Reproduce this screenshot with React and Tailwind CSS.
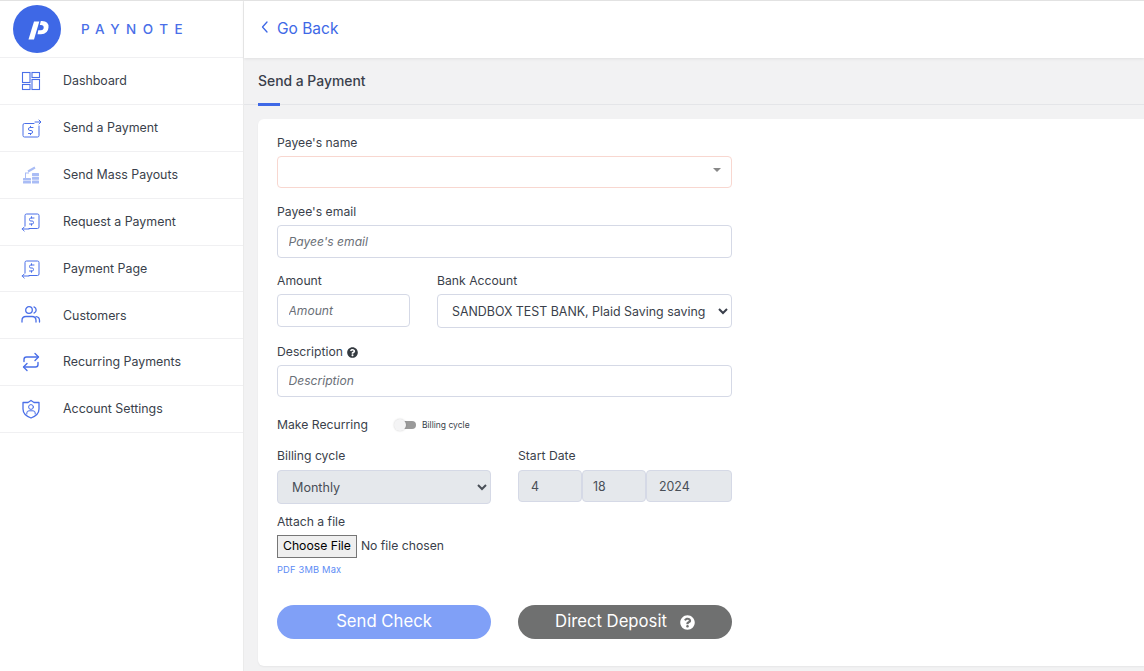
import {FaQuestionCircle} from 'react-icons/fa'

const DashboardIcon = () => (
    <svg width="20" height="20" viewBox="0 0 20 20" fill="none" stroke="#4a6fe8" strokeWidth="1.1">
        <rect x="1.500" y="1.500" width="7.500" height="10" />
        <rect x="11" y="1.500" width="7.500" height="5" />
        <rect x="1.500" y="13.500" width="7.500" height="5" />
        <rect x="11" y="8.500" width="7.500" height="10" />
    </svg>
)

const SendIcon = () => (
    <svg width="20" height="20" viewBox="0 0 20 20" fill="none" stroke="#4a6fe8" strokeWidth="1" strokeLinecap="round" strokeLinejoin="round">
        <path d="M13 5.500H3.500Q2 5.500 2 7V17.500Q2 19 3.500 19H16.500Q18 19 18 17.500V8" />
        <path d="M14 4H20M18 2L20 4L18 6" />
        <path d="M12 9.500H8.800Q7.500 9.500 7.500 11Q7.500 12.500 8.800 12.500H10.200Q11.500 12.500 11.500 14Q11.500 15.500 10.200 15.500H7.500M9.500 8.300V9.500M9.500 15.500V16.700" />
    </svg>
)

const MassIcon = () => (
    <svg width="20" height="20" viewBox="0 0 20 20" fill="#a9bcf5" stroke="none">
        <rect x="2" y="13" width="8" height="2.500" rx="0.5" />
        <rect x="2" y="16" width="8" height="2.500" rx="0.5" />
        <rect x="11" y="8" width="7" height="3" rx="0.5" />
        <rect x="11" y="11.700" width="7" height="3" rx="0.5" />
        <rect x="11" y="15.400" width="7" height="3.100" rx="0.5" />
        <path d="M4 13V7.500H8V8.500H5V13Z" />
        <path d="M6.500 5.500L13.500 1.500L14.500 3.500L7.500 7.500Z" />
    </svg>
)

const RequestIcon = () => (
    <svg width="20" height="20" viewBox="0 0 20 20" fill="none" stroke="#4a6fe8" strokeWidth="1" strokeLinecap="round" strokeLinejoin="round">
        <path d="M4 14V3.500Q4 2 5.500 2H16.500Q18 2 18 3.500V15Q18 16.500 16.500 16.500H8" />
        <path d="M1.200 17H8M3.200 15L1.200 17L3.200 19" />
        <path d="M13 6H9.800Q8.500 6 8.500 7.500Q8.500 9 9.800 9H11.200Q12.500 9 12.500 10.500Q12.500 12 11.200 12H8.500M10.500 4.700V6M10.500 12V13.300" />
    </svg>
)

const CustomersIcon = () => (
    <svg width="20" height="20" viewBox="0 0 20 20" fill="none" stroke="#4a6fe8" strokeWidth="1.300" strokeLinecap="round">
        <circle cx="8" cy="5" r="3.300" />
        <path d="M1 17V15.500Q1 11.500 5 11.500H11Q15 11.500 15 15.500V17" />
        <path d="M13 1.900A3.300 3.300 0 0 1 13 8.100" />
        <path d="M15 11.700Q18.500 12 18.500 15.500V17" />
    </svg>
)

const RecurringIcon = () => (
    <svg width="20" height="20" viewBox="0 0 20 20" fill="none" stroke="#4a6fe8" strokeWidth="1.400" strokeLinecap="round" strokeLinejoin="round">
        <path d="M3 9.500V7.500Q3 5 5.500 5H17" />
        <path d="M14 1.500L17.500 5L14 8.500" />
        <path d="M17 10.500V12.500Q17 15 14.500 15H3" />
        <path d="M6 11.500L2.500 15L6 18.500" />
    </svg>
)

const ShieldIcon = () => (
    <svg width="20" height="20" viewBox="0 0 20 20" fill="none" stroke="#4a6fe8" strokeWidth="1.300" strokeLinecap="round" strokeLinejoin="round">
        <path d="M10 1.500L13 3.500H18V10Q18 16 10 19Q2 16 2 10V3.500H7Z" />
        <circle cx="10" cy="8" r="2.400" strokeWidth="1" />
        <path d="M5.800 15V14Q5.800 11.800 8 11.800H12Q14.200 11.800 14.200 14V15" strokeWidth="1" />
    </svg>
)

const menuItems = [
    {label: 'Dashboard', icon: <DashboardIcon />},
    {label: 'Send a Payment', icon: <SendIcon />},
    {label: 'Send Mass Payouts', icon: <MassIcon />},
    {label: 'Request a Payment', icon: <RequestIcon />},
    {label: 'Payment Page', icon: <RequestIcon />},
    {label: 'Customers', icon: <CustomersIcon />},
    {label: 'Recurring Payments', icon: <RecurringIcon />},
    {label: 'Account Settings', icon: <ShieldIcon />},
]

const labelClass = 'block text-[12.2px] leading-[18px] text-[#3a3f4b]'
const inputClass = 'block w-full rounded-[4px] border border-[#d5d9e6] bg-white px-[10.5px] text-[12.1px] italic placeholder:text-[#6b7078] outline-none'
const lockedClass = 'rounded-[4px] border border-[#d5d9e6] bg-[#e5e8ec] text-[12.4px] leading-[31px] h-[32px] text-[#494f57]'

const Sidebar = () => (
    <aside className="w-[244px] shrink-0 bg-white border-r border-[#ebebeb]">
        <div className="flex h-[57px] items-center border-b border-[#f0f0f2] pl-[13px]">
            <svg width="48" height="48" viewBox="0 0 48 48">
                <circle cx="24" cy="24" r="24" fill="#3e68e6" />
                <path fill="#fff" d="M21 16.500H26.300L21 34.500H15.500Z" />
                <path fill="#fff" d="M27.800 16H29Q36 16 35.500 22.500Q35 29 28 29.200H24.500L25.300 25.300H28Q30.500 25.300 30.700 22.500Q30.800 20 28 20H26.800Z" />
            </svg>
            <span className="ml-[20px] text-[13.5px] font-medium tracking-[0.48em] text-[#4a6fe8]">PAYNOTE</span>
        </div>
        {menuItems.map((item) => (
            <div key={item.label} className="flex h-[46.9px] items-center border-b border-[#f0f0f2] pl-[21px]">
                <span className="w-[42px]">{item.icon}</span>
                <span className="pt-[1px] text-[12.4px] text-[#3a3f4b]">{item.label}</span>
            </div>
        ))}
    </aside>
)

const App = () => {
    return (
        <div className="flex h-[671px] w-[1144px] overflow-hidden border-t border-[#e2e2e2] bg-[#f2f2f3] font-['Inter',sans-serif]">
            <Sidebar />
            <main className="min-w-0 flex-1">
                {/* 상단 바 */}
                <div className="flex h-[57px] items-center bg-white pb-[2px] pl-[16px] shadow-[0_1px_3px_rgba(0,0,0,0.08)]">
                    <svg width="10" height="14" viewBox="0 0 10 14" fill="none" stroke="#3e68e6" strokeWidth="1.300" strokeLinecap="round" strokeLinejoin="round" className="mb-[4px]">
                        <path d="M7 2L2.500 7L7 12" />
                    </svg>
                    <span className="ml-[7px] text-[15.5px] text-[#3e68e6]">Go Back</span>
                </div>

                <div className="relative h-[47px] border-b border-[#e4e5e8] pl-[14px]">
                    <div className="pt-[14px] text-[13.9px] font-medium leading-[18px] text-[#3a3f4b]">Send a Payment</div>
                    <div className="absolute bottom-[-2px] left-[14px] h-[3px] w-[22px] bg-[#3e68e6]" />
                </div>

                <div className="ml-[14px] mt-[14px] h-[547px] rounded-l-[6px] bg-white pl-[19px] pt-[15px] shadow-[0_1px_2px_rgba(0,0,0,0.05)]">
                    <div className="w-[455px]">
                        <label className={labelClass}>Payee's name</label>
                        <div className="relative mt-[4px] h-[32px] rounded-[4px] border border-[#f8d7d0] bg-white">
                            <span className="absolute right-[10px] top-[11px] h-0 w-0 border-x-[4px] border-t-[4px] border-x-transparent border-t-[#888]" />
                        </div>

                        <label className={`${labelClass} mt-[15px]`}>Payee's email</label>
                        <input className={`${inputClass} mt-[4px] h-[33px]`} placeholder="Payee's email" />

                        <div className="mt-[14px] flex">
                            <div className="w-[133px]">
                                <label className={labelClass}>Amount</label>
                                <input className={`${inputClass} mt-[4px] h-[33px]`} placeholder="Amount" />
                            </div>
                            <div className="ml-[27px] flex-1">
                                <label className={labelClass}>Bank Account</label>
                                <select className="mt-[4px] block h-[34px] w-full rounded-[4px] border border-[#d5d9e6] bg-white pl-[10px] text-[12.4px] text-[#3a3f4b] outline-none">
                                    <option>SANDBOX TEST BANK, Plaid Saving saving</option>
                                </select>
                            </div>
                        </div>

                        <label className={`${labelClass} mt-[15px] flex items-center`}>
                            Description
                            <FaQuestionCircle className="ml-[4px] text-[11px] text-[#343a40]" />
                        </label>
                        <input className={`${inputClass} mt-[4px] h-[32px] pb-[1px]`} placeholder="Description" />

                        <div className="mt-[20px] flex h-[16px] items-center">
                            <span className="w-[117px] text-[12.2px] text-[#3a3f4b]">Make Recurring</span>
                            <span className="relative h-[8px] w-[16px] translate-x-[6px] rounded-full bg-[#9a9a9a]">
                                <span className="absolute left-[-6px] top-[-2px] h-[12px] w-[12px] rounded-full bg-[#f4f4f5] shadow-[0_0_2px_rgba(0,0,0,0.2)]" />
                            </span>
                            <span className="ml-[12px] text-[8.5px] text-[#3a3f4b]">Billing cycle</span>
                        </div>

                        <div className="mt-[14px] flex justify-between">
                            <div className="w-[214px]">
                                <label className={labelClass}>Billing cycle</label>
                                <select disabled className="mt-[5px] block h-[34px] w-full rounded-[4px] border border-[#d5d9e6] bg-[#e5e8ec] pl-[10px] text-[12.6px] text-[#494f57] opacity-100 outline-none">
                                    <option>Monthly</option>
                                </select>
                            </div>
                            <div className="w-[214px]">
                                <label className={labelClass}>Start Date</label>
                                <div className="mt-[5px] flex">
                                    <div className={`${lockedClass} w-[64px] pl-[12px]`}>4</div>
                                    <div className={`${lockedClass} w-[64px] pl-[10px]`}>18</div>
                                    <div className={`${lockedClass} w-[86px] pl-[12px]`}>2024</div>
                                </div>
                            </div>
                        </div>

                        <label className={`${labelClass} mt-[9px]`}>Attach a file</label>
                        <input type="file" className="mt-[4px] block h-[23px] w-[214px] text-[12.2px] text-[#3a3f4b] file:mr-[4px] file:h-[23px] file:cursor-default file:border file:border-[#767676] file:bg-[#efefef] file:px-[5px] file:text-[12.2px] file:text-black" />
                        <div className="mt-[6px] text-[9.3px] leading-[12px] tracking-[0.02em] text-[#5d8cf5]">PDF 3MB Max</div>

                        <div className="mt-[29px] flex justify-between">
                            <button className="h-[34px] w-[214px] rounded-full bg-[#80a0f7] pb-[1px] text-[16.7px] text-white">Send Check</button>
                            <button className="flex h-[34px] w-[214px] items-center justify-center rounded-full bg-[#6f7070] text-[16.7px] text-white">
                                <span className="pb-[1px]">Direct Deposit</span>
                                <FaQuestionCircle className="ml-[13px] text-[15px]" />
                            </button>
                        </div>
                    </div>
                </div>
            </main>
        </div>
    )
}

export default App
